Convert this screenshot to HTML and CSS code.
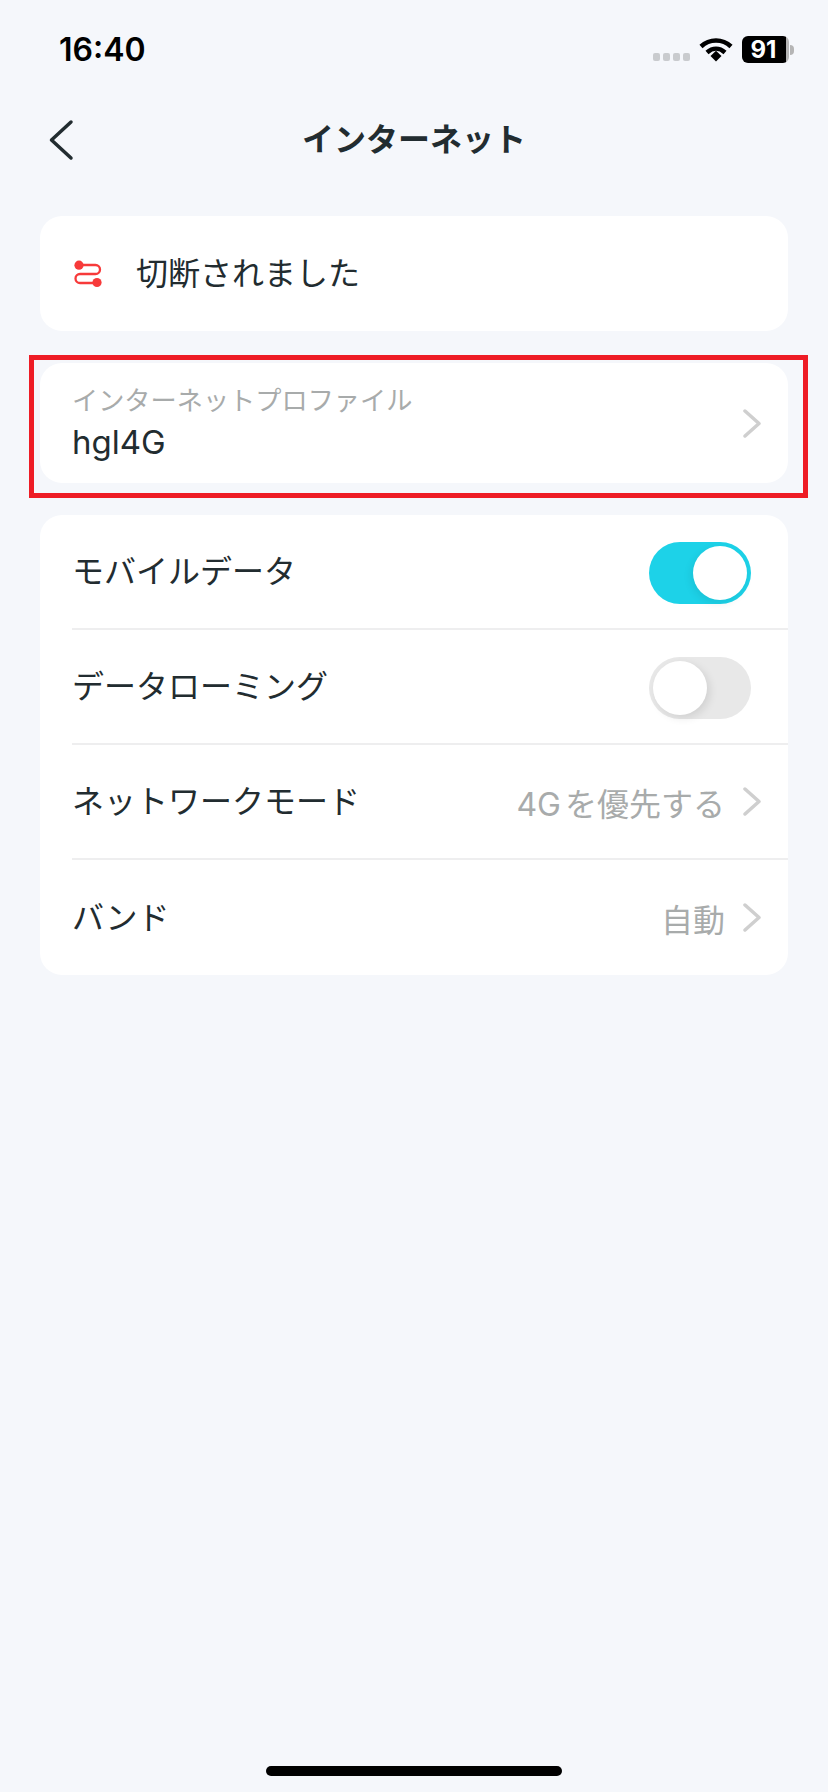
FILE: index.html
```html
<!DOCTYPE html>
<html lang="ja">
  <head>
    <meta charset="UTF-8" />
    <meta name="viewport" content="width=device-width, initial-scale=1.0" />
    <title>インターネット</title>
    <link rel="stylesheet" href="styles.css">
  </head>
  <body>
    <div class="page">
      <div class="status-bar">
        <div class="time">16:40</div>
        <div class="status-icons">
          <div class="signal"><span></span><span></span><span></span><span></span></div>
          <svg class="wifi" width="34" height="25" viewBox="0 0 34 25">
            <path d="M2 9.5C10.5 1.5 23.5 1.5 32 9.5" fill="none" stroke="#000" stroke-width="4.5" />
            <path d="M8 15.5C13.5 10.5 20.5 10.5 26 15.5" fill="none" stroke="#000" stroke-width="4.5" />
            <path d="M11.5 19L17 13.8L22.5 19L17 24.5Z" fill="#000" />
          </svg>
          <div class="battery">
            <div class="battery-body"><span class="battery-level">91</span></div>
            <div class="battery-tip"></div>
          </div>
        </div>
      </div>

      <header class="nav">
        <svg class="back" width="26" height="44" viewBox="0 0 26 44">
          <path d="M23 4L3.5 22L23 40" fill="none" stroke="#222c30" stroke-width="3.5" stroke-linecap="round" stroke-linejoin="round" />
        </svg>
        <h1>インターネット</h1>
      </header>

      <section class="card status-card">
        <svg class="link-icon" width="28" height="28" viewBox="0 0 28 28">
          <path d="M5 5H21.5A4.5 4.5 0 0 1 21.500 14H6A4.500 4.500 0 0 0 6 23H22" fill="none" stroke="#f73a3a" stroke-width="2.300" />
          <circle cx="5" cy="5.200" r="4.600" fill="#f73a3a" />
          <circle cx="23" cy="22.500" r="4.600" fill="#f73a3a" />
        </svg>
        <span class="row-label">切断されました</span>
      </section>

      <div class="highlight">
        <section class="card profile-card">
          <div class="profile-text">
            <div class="profile-label">インターネットプロファイル</div>
            <div class="profile-name">hgl4G</div>
          </div>
          <svg class="chevron" width="18" height="29" viewBox="0 0 18 29">
            <path d="M2 2L16 14.5L2 27" fill="none" stroke="#cfcfcf" stroke-width="3.5" stroke-linecap="round" stroke-linejoin="round" />
          </svg>
        </section>
      </div>

      <section class="card settings-card">
        <div class="row">
          <span class="row-label">モバイルデータ</span>
          <div class="toggle on"><span class="knob"></span></div>
        </div>
        <div class="row">
          <span class="row-label">データローミング</span>
          <div class="toggle"><span class="knob"></span></div>
        </div>
        <div class="row">
          <span class="row-label">ネットワークモード</span>
          <div class="row-right">
            <span class="row-value"><span class="latin">4G</span>を優先する</span>
            <svg class="chevron" width="18" height="29" viewBox="0 0 18 29">
              <path d="M2 2L16 14.5L2 27" fill="none" stroke="#cfcfcf" stroke-width="3.5" stroke-linecap="round" stroke-linejoin="round" />
            </svg>
          </div>
        </div>
        <div class="row">
          <span class="row-label">バンド</span>
          <div class="row-right">
            <span class="row-value">自動</span>
            <svg class="chevron" width="18" height="29" viewBox="0 0 18 29">
              <path d="M2 2L16 14.5L2 27" fill="none" stroke="#cfcfcf" stroke-width="3.5" stroke-linecap="round" stroke-linejoin="round" />
            </svg>
          </div>
        </div>
      </section>

      <div class="home-indicator"></div>
    </div>
  </body>
</html>
```

FILE: styles.css
```css
* {
  margin: 0;
  padding: 0;
  box-sizing: border-box;
}

body {
  font-family: Inter, "Noto Sans CJK JP", sans-serif;
  background: #f5f7fb;
  color: #222c30;
}

.page {
  display: flex;
  flex-direction: column;
  height: 1792px;
  overflow: hidden;
}

.status-bar {
  display: flex;
  justify-content: space-between;
  align-items: center;
  height: 98px;
  padding-left: 59px;
  padding-right: 34px;
}

.time {
  color: #000;
  font-size: 32px;
  font-weight: 600;
}

.status-icons {
  display: flex;
  align-items: center;
  margin-top: 1px;
}

.signal {
  display: flex;
  gap: 3px;
  margin-top: 15px;
  margin-right: 9px;
}

.signal span {
  width: 7px;
  height: 8px;
  border-radius: 2px;
  background: #c9cbce;
}

.wifi {
  margin-right: 9px;
}

.battery {
  display: flex;
  align-items: center;
}

.battery-body {
  width: 47px;
  height: 27px;
  border-radius: 6px;
  background: linear-gradient(90deg, #000 93%, #b5b5b5 93%);
  color: #fff;
  font-size: 24px;
  font-weight: 700;
  line-height: 27px;
  text-align: center;
  padding-right: 4px;
}

.battery-tip {
  width: 4px;
  height: 10px;
  margin-left: 1px;
  border-radius: 0 4px 4px 0;
  background: #b5b5b5;
}

.nav {
  position: relative;
  display: flex;
  align-items: center;
  justify-content: center;
  height: 82px;
  margin-bottom: 36px;
}

.nav h1 {
  font-size: 32px;
  font-weight: 700;
  margin-bottom: 4px;
}

.back {
  position: absolute;
  left: 48px;
  top: 20px;
}

.card {
  margin: 0 40px;
  background: #fff;
  border-radius: 22px;
}

.status-card {
  display: flex;
  align-items: center;
  gap: 34px;
  height: 115px;
  padding-left: 34px;
  margin-bottom: 24px;
}

.row-label {
  font-size: 32px;
  line-height: 42px;
}

.highlight {
  margin: 0 20px 17px 29px;
  padding: 3px 15px 10px 6px;
  border: 5px solid #ee1c25;
}

.profile-card {
  display: flex;
  justify-content: space-between;
  align-items: center;
  height: 120px;
  margin: 0;
  padding: 0 27px 0 32px;
}

.profile-label {
  color: #a8abab;
  font-size: 26.2px;
  line-height: 34px;
  margin-bottom: 3px;
}

.profile-name {
  font-size: 33px;
  line-height: 42px;
}

.settings-card {
  height: 460px;
}

.row {
  display: flex;
  justify-content: space-between;
  align-items: center;
  height: 115px;
  margin-left: 32px;
  padding-right: 27px;
  border-bottom: 2px solid #eeeeef;
}

.row:last-child {
  border-bottom: none;
}

.row-right {
  display: flex;
  align-items: center;
  gap: 18px;
}

.row-value {
  color: #a8abab;
  font-size: 32px;
}

.latin {
  margin-right: 4px;
}

.toggle {
  display: flex;
  align-items: center;
  width: 102px;
  height: 62px;
  margin-top: 2px;
  margin-right: 10px;
  padding: 4px;
  border-radius: 31px;
  background: #e8e8e8;
}

.toggle.on {
  justify-content: flex-end;
  background: #1dd2e8;
}

.knob {
  width: 54px;
  height: 54px;
  border-radius: 50%;
  background: #fff;
  box-shadow: 3px 3px 8px rgba(0, 0, 0, 0.1);
}

.toggle.on .knob {
  box-shadow: -2px 3px 8px rgba(0, 0, 0, 0.08);
}

.home-indicator {
  align-self: center;
  width: 296px;
  height: 10px;
  margin-top: auto;
  margin-bottom: 16px;
  border-radius: 5px;
  background: #000;
}
```
